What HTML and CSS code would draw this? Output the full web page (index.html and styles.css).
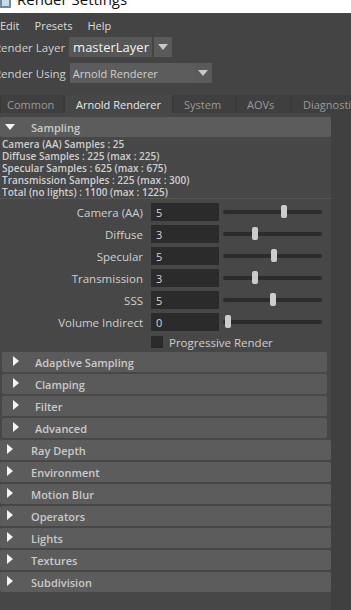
FILE: index.html
```html
<!DOCTYPE html>
<html>
<head>
    <link rel="stylesheet" href="styles.css">
</head>
<body>
    <div class="titlebar">
        <svg class="appicon" width="13" height="13" viewBox="0 0 13 13">
            <rect x="1" y="0" width="11" height="11" fill="#6f8aa3"/>
            <rect x="3" y="2" width="7" height="7" fill="#c9dbe9"/>
        </svg>
        <span class="title">Render Settings</span>
    </div>

    <div class="menubar">
        <span>Edit</span>
        <span>Presets</span>
        <span>Help</span>
    </div>

    <div class="pickrow">
        <span class="picklabel">Render Layer</span>
        <div class="combo layer">
            <span class="combotext">masterLayer</span>
        </div>
        <div class="combobtn"><span class="arrowdown"></span></div>
    </div>
    <div class="pickrow">
        <span class="picklabel">Render Using</span>
        <div class="combo using">
            <span class="combotext">Arnold Renderer</span>
        </div>
        <div class="combobtn"><span class="arrowdown"></span></div>
    </div>

    <div class="tabs">
        <div class="tab t-common">Common</div>
        <div class="tab active t-arnold">Arnold Renderer</div>
        <div class="tab t-system">System</div>
        <div class="tab t-aovs">AOVs</div>
        <div class="tab t-diag">Diagnostics</div>
    </div>

    <div class="panel">
        <div class="content">
            <div class="frame open">
                <span class="tri down"></span>
                <span class="frametitle">Sampling</span>
            </div>

            <div class="info">
                <div>Camera (AA) Samples : 25</div>
                <div>Diffuse Samples : 225 (max : 225)</div>
                <div>Specular Samples : 625 (max : 675)</div>
                <div>Transmission Samples : 225 (max : 300)</div>
                <div>Total (no lights) : 1100 (max : 1225)</div>
            </div>

            <div class="attrs" id="attrs"></div>

            <div class="checkrow">
                <span class="checkbox"></span>
                <span class="checklabel">Progressive Render</span>
            </div>

            <div class="subframes">
                <div class="frame sub"><span class="tri right"></span><span class="frametitle">Adaptive Sampling</span></div>
                <div class="frame sub"><span class="tri right"></span><span class="frametitle">Clamping</span></div>
                <div class="frame sub"><span class="tri right"></span><span class="frametitle">Filter</span></div>
                <div class="frame sub"><span class="tri right"></span><span class="frametitle">Advanced</span></div>
            </div>

            <div class="frame top"><span class="tri right"></span><span class="frametitle">Ray Depth</span></div>
            <div class="frame top"><span class="tri right"></span><span class="frametitle">Environment</span></div>
            <div class="frame top"><span class="tri right"></span><span class="frametitle">Motion Blur</span></div>
            <div class="frame top"><span class="tri right"></span><span class="frametitle">Operators</span></div>
            <div class="frame top"><span class="tri right"></span><span class="frametitle">Lights</span></div>
            <div class="frame top"><span class="tri right"></span><span class="frametitle">Textures</span></div>
            <div class="frame top"><span class="tri right"></span><span class="frametitle">Subdivision</span></div>
        </div>
        <div class="gutter"></div>
    </div>

    <script src="app.js"></script>
</body>
</html>
```

FILE: app.js
```js
// Sampling sliders: label, value, slider position (0..1)
const attrs = [
    { label: 'Camera (AA)', value: 5, pos: 0.586 },
    { label: 'Diffuse', value: 3, pos: 0.293 },
    { label: 'Specular', value: 5, pos: 0.485 },
    { label: 'Transmission', value: 3, pos: 0.293 },
    { label: 'SSS', value: 5, pos: 0.475 },
    { label: 'Volume Indirect', value: 0, pos: 0.02 }
];

const container = document.getElementById('attrs');

attrs.forEach(function (attr) {
    const row = document.createElement('div');
    row.className = 'attr';
    row.innerHTML = `
        <span class="attrlabel">${attr.label}</span>
        <span class="field">${attr.value}</span>
        <span class="slider">
            <span class="track"></span>
            <span class="thumb" style="left: ${(attr.pos * 100).toFixed(1)}%;"></span>
        </span>`;
    container.appendChild(row);
});
```

FILE: styles.css
```css
body {
    margin: 0;
    background-color: #444444;
    font-family: "Open Sans", "Noto Sans", sans-serif;
    color: #cfcfcf;
    width: 351px;
    height: 610px;
    overflow: hidden;
}

.titlebar {
    height: 13px;
    background-color: #ffffff;
    overflow: hidden;
    display: flex;
    align-items: flex-end;
    gap: 5px;
}

.appicon {
    margin-left: -1px;
    margin-bottom: 3px;
    flex: none;
}

.title {
    color: #111111;
    font-family: "Open Sans", sans-serif;
    font-size: 15px;
    line-height: 15px;
    margin-bottom: 6px;
}

.menubar {
    display: flex;
    gap: 15px;
    height: 24px;
    align-items: center;
    font-size: 11px;
    color: #dcdcdc;
}

.pickrow {
    display: flex;
    align-items: center;
    height: 20px;
    margin-left: -6px;
    margin-bottom: 6px;
}

.picklabel {
    font-size: 11.5px;
    color: #d0d0d0;
    margin-right: 4px;
}

.combo {
    height: 20px;
    background-color: #565656;
    display: flex;
    align-items: center;
    border-radius: 1px;
}

.combo.layer {
    width: 83px;
}

.combo.using {
    width: 124px;
    background-color: #5c5c5c;
}

.combotext {
    font-size: 11px;
    padding-left: 4px;
}

.layer .combotext {
    color: #f4f4f4;
    font-size: 13px;
}

.using .combotext {
    color: #d0d0d0;
    padding-left: 3px;
}

.combobtn {
    width: 18px;
    height: 20px;
    margin-left: 2px;
    background-color: #5a5a5a;
    display: flex;
    align-items: center;
    justify-content: center;
}

.using + .combobtn {
    margin-left: 0;
}

.arrowdown {
    width: 0;
    height: 0;
    border-left: 5px solid transparent;
    border-right: 5px solid transparent;
    border-top: 6px solid #c8c8c8;
}

.tabs {
    display: flex;
    margin-top: 12px;
    height: 18px;
    gap: 2px;
    background-color: #3a3a3a;
}

.tab {
    background-color: #3f3f3f;
    color: #9a9a9a;
    font-size: 11px;
    display: flex;
    align-items: center;
    padding-left: 6px;
    flex: none;
}

.tab.active {
    background-color: #474747;
    color: #e8e8e8;
    padding-left: 11px;
}

.t-common { width: 56px; margin-left: 1px; }
.t-arnold { width: 96px; }
.t-system { width: 51px; padding-left: 10px; }
.t-aovs { width: 43px; padding-left: 10px; }
.t-diag { width: 70px; padding-left: 11px; }

.panel {
    display: flex;
    height: 497px;
}

.content {
    width: 331px;
    padding-top: 4px;
    background-color: #474747;
}

.gutter {
    flex: 1;
    background-color: #404040;
}

.frame {
    height: 20px;
    background-color: #5c5c5c;
    display: flex;
    align-items: center;
    border-radius: 2px;
    margin-bottom: 2px;
}

.frametitle {
    font-size: 11px;
    font-weight: 600;
    color: #cacaca;
}

.tri {
    width: 0;
    height: 0;
    flex: none;
}

.tri.down {
    border-left: 5px solid transparent;
    border-right: 5px solid transparent;
    border-top: 6px solid #f4f4f4;
    margin-left: 5px;
    margin-right: 16px;
}

.tri.right {
    border-top: 5px solid transparent;
    border-bottom: 5px solid transparent;
    border-left: 6px solid #f4f4f4;
    margin-top: -3px;
}

.frame.open {
    margin-bottom: 1px;
}

.info {
    font-size: 10px;
    font-weight: 600;
    line-height: 12px;
    padding-left: 2px;
    color: #cfcfcf;
    border-bottom: 1px solid #555555;
    margin-bottom: 4px;
}

.attr {
    display: flex;
    align-items: center;
    height: 18px;
    margin-bottom: 4px;
}

.attrlabel {
    width: 143px;
    text-align: right;
    font-size: 11.5px;
    color: #cfcfcf;
    flex: none;
}

.field {
    width: 63px;
    height: 18px;
    margin-left: 8px;
    padding-left: 5px;
    background-color: #2b2b2b;
    font-size: 11px;
    line-height: 19px;
    color: #d6d6d6;
    flex: none;
}

.slider {
    position: relative;
    width: 99px;
    height: 14px;
    margin-left: 4px;
    display: flex;
    align-items: center;
}

.track {
    width: 100%;
    height: 4px;
    background-color: #2c2c2c;
    border-radius: 2px;
}

.thumb {
    position: absolute;
    top: 0;
    width: 6px;
    height: 13px;
    background-color: #cccccc;
    border-radius: 2px;
}

.checkrow {
    display: flex;
    align-items: center;
    height: 14px;
    padding-left: 151px;
    margin-top: 2px;
    margin-bottom: 3px;
}

.checkbox {
    width: 12px;
    height: 12px;
    background-color: #2a2a2a;
    margin-right: 6px;
}

.checklabel {
    font-size: 11.5px;
    color: #cfcfcf;
}

.subframes {
    padding: 0 4px 0 2px;
    margin-bottom: 1px;
}

.frame.sub .tri {
    margin-left: 11px;
    margin-right: 16px;
}

.frame.sub {
    background-color: #5a5a5a;
}

.frame.top .tri {
    margin-left: 7px;
    margin-right: 18px;
}
```
